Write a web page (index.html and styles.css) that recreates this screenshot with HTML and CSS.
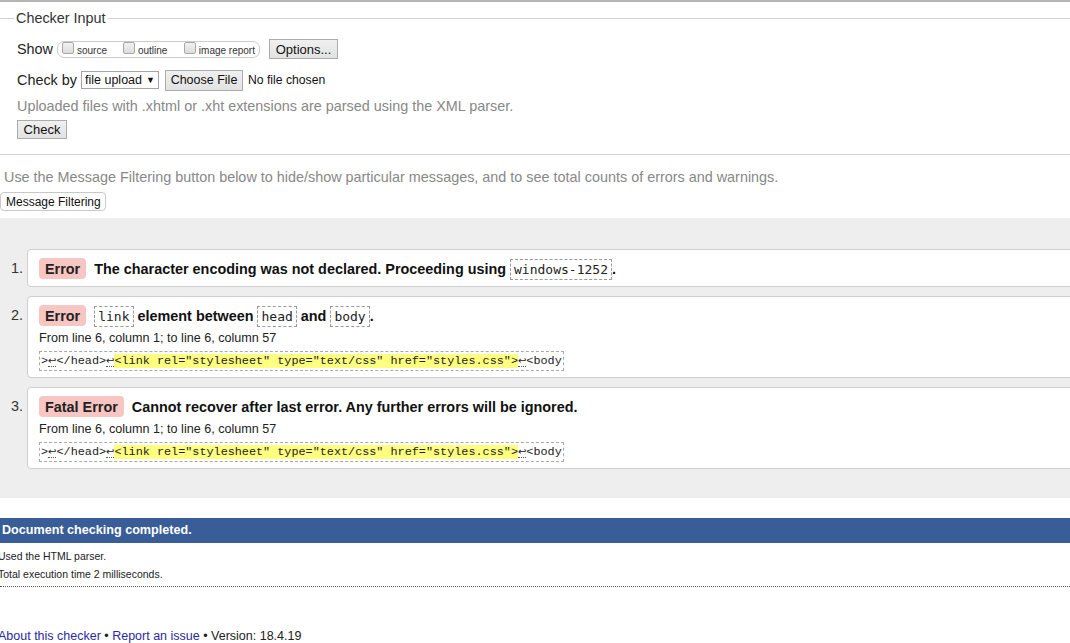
FILE: index.html
```html
<!DOCTYPE html>
<html>
<head>
<meta charset="utf-8">
<title>Checker</title>
<link rel="stylesheet" href="styles.css">
</head>
<body>
<div class="topline"></div>
<section class="checker">
  <div class="legend"><span>Checker Input</span></div>
  <div class="row show-row">
    <span class="label">Show</span>
    <span class="group">
      <span class="opt"><span class="cb"></span>source</span>
      <span class="opt"><span class="cb"></span>outline</span>
      <span class="opt"><span class="cb"></span>image report</span>
    </span>
    <span class="btn btn-options">Options...</span>
  </div>
  <div class="row by-row">
    <span class="label">Check by</span>
    <span class="select">file upload <span class="arrow">▼</span></span>
    <span class="btn btn-file">Choose File</span>
    <span class="nofile">No file chosen</span>
  </div>
  <div class="row note">Uploaded files with .xhtml or .xht extensions are parsed using the XML parser.</div>
  <div class="row check-row"><span class="btn btn-check">Check</span></div>
</section>
<div class="filter-text">Use the Message Filtering button below to hide/show particular messages, and to see total counts of errors and warnings.</div>
<div class="filter-row"><span class="btn-filter">Message Filtering</span></div>
<div class="results">
  <ol class="msgs">
    <li class="item">
      <span class="num">1.</span>
      <div class="box">
        <div class="msg"><span class="badge">Error</span><span class="text">The character encoding was not declared. Proceeding using <code>windows-1252</code>.</span></div>
      </div>
    </li>
    <li class="item">
      <span class="num">2.</span>
      <div class="box">
        <div class="msg"><span class="badge">Error</span><span class="text"><code>link</code> element between <code>head</code> and <code>body</code>.</span></div>
        <div class="loc">From line 6, column 1; to line 6, column 57</div>
        <div class="extract"><code class="ex">&gt;<span class="lf">↩</span>&lt;/head&gt;<span class="lf">↩</span><b>&lt;link rel="stylesheet" type="text/css" href="styles.css"&gt;</b><span class="lf">↩</span>&lt;body</code></div>
      </div>
    </li>
    <li class="item">
      <span class="num">3.</span>
      <div class="box">
        <div class="msg"><span class="badge">Fatal Error</span><span class="text">Cannot recover after last error. Any further errors will be ignored.</span></div>
        <div class="loc">From line 6, column 1; to line 6, column 57</div>
        <div class="extract"><code class="ex">&gt;<span class="lf">↩</span>&lt;/head&gt;<span class="lf">↩</span><b>&lt;link rel="stylesheet" type="text/css" href="styles.css"&gt;</b><span class="lf">↩</span>&lt;body</code></div>
      </div>
    </li>
  </ol>
</div>
<div class="done">Document checking completed.</div>
<div class="details">
  <p>Used the HTML parser.</p>
  <p>Total execution time 2 milliseconds.</p>
</div>
<div class="footer"><a href="#">About this checker</a> • <a href="#">Report an issue</a> • Version: 18.4.19</div>
</body>
</html>
```
FILE: styles.css
```css
html, body {
  margin: 0;
  padding: 0;
  background: #fff;
  overflow: hidden;
}
body {
  font-family: "Liberation Sans", Arial, sans-serif;
  font-size: 14.4px;
  color: #222;
  width: 1070px;
}
.topline {
  border-top: 2px solid #b4b4b4;
}
.checker {
  border-bottom: 1px solid #cfcfcf;
  padding-bottom: 15px;
}
.legend {
  display: flex;
  align-items: center;
  height: 20px;
  margin-top: 6px;
  color: #333;
}
.legend::before {
  content: "";
  width: 14px;
  border-top: 1px solid #cfcfcf;
}
.legend::after {
  content: "";
  flex: 1;
  border-top: 1px solid #cfcfcf;
}
.legend span {
  padding: 0 2px;
}
.row {
  display: flex;
  align-items: center;
  padding-left: 17px;
  height: 20px;
  white-space: nowrap;
}
.label {
  color: #222;
  margin-right: 4px;
}
.show-row {
  margin-top: 11px;
}
.group {
  display: flex;
  align-items: center;
  box-sizing: border-box;
  height: 17px;
  border: 1px solid #ccc;
  border-radius: 7px;
  padding: 0 4px;
  width: 203px;
  font-size: 10px;
  color: #333;
  white-space: nowrap;
}
.opt {
  display: flex;
  align-items: center;
  width: 62px;
  padding-top: 2px;
}
.opt:last-child {
  width: auto;
}
.cb {
  display: inline-block;
  width: 10px;
  height: 10px;
  border: 1px solid #a8a8a8;
  border-radius: 2px;
  background: linear-gradient(#f2f2f2, #dcdcdc);
  margin-right: 3px;
  margin-top: -5px;
}
.btn {
  display: inline-flex;
  align-items: center;
  justify-content: center;
  box-sizing: border-box;
  border: 1px solid #acacac;
  background: linear-gradient(#f0f0f0, #e2e2e2);
  font-size: 13px;
  color: #111;
}
.btn-options {
  margin-left: 9px;
  width: 69px;
  height: 20px;
}
.by-row {
  margin-top: 11px;
}
.select {
  display: inline-flex;
  align-items: center;
  box-sizing: border-box;
  height: 18px;
  width: 78px;
  border: 1px solid #a6a6a6;
  padding-left: 3px;
  font-size: 12.5px;
  color: #111;
}
.arrow {
  font-size: 9px;
  margin-left: 4px;
}
.btn-file {
  margin-left: 6px;
  width: 78px;
  height: 21px;
  font-size: 12.5px;
}
.nofile {
  margin-left: 5px;
  font-size: 12.2px;
  color: #111;
}
.note {
  margin-top: 6px;
  color: #888;
}
.check-row {
  margin-top: 4px;
  height: 19px;
}
.btn-check {
  width: 50px;
  height: 19px;
}
.filter-text {
  margin-top: 12px;
  height: 20px;
  line-height: 20px;
  padding-left: 4px;
  color: #888;
}
.filter-row {
  margin-top: 5px;
  height: 18px;
}
.btn-filter {
  display: inline-flex;
  align-items: center;
  box-sizing: border-box;
  height: 19px;
  width: 106px;
  padding-left: 5px;
  border: 1px solid #c8c8c8;
  border-radius: 4px;
  font-size: 12px;
  color: #111;
  background: #fff;
}
.results {
  margin-top: 8px;
  background: #eee;
  padding: 31px 0 29px 0;
  overflow: hidden;
}
.msgs {
  list-style: none;
  margin: 0;
  padding: 0;
  display: flex;
  flex-direction: column;
  gap: 9px;
}
.item {
  display: flex;
  align-items: flex-start;
}
.num {
  text-align: right;
  padding-right: 4px;
  box-sizing: border-box;
  width: 27px;
  padding-top: 9px;
  height: 30px;
  line-height: 21px;
  color: #333;
}
.box {
  flex: 1;
  margin-right: -4px;
  background: #fff;
  border: 1px solid #cfcfcf;
  border-radius: 4px;
  padding: 8px 0 7px 11px;
}
.msg {
  display: flex;
  align-items: center;
  height: 21px;
  white-space: nowrap;
}
.badge {
  display: inline-flex;
  align-items: center;
  height: 21px;
  padding: 0 6px;
  border-radius: 4px;
  background: #f7c6c2;
  font-weight: bold;
  color: #222;
  margin-right: 8px;
}
.text {
  font-weight: bold;
  color: #111;
}
code {
  font-family: "DejaVu Sans Mono", "Liberation Mono", monospace;
  font-weight: normal;
  font-size: 13px;
  border: 1px dashed #999;
  padding: 2px 3px;
  color: #222;
}
.loc {
  margin-top: 5px;
  height: 14px;
  line-height: 14px;
  font-size: 12.6px;
  color: #222;
}
.extract {
  margin-top: 6px;
  height: 19px;
}
code.ex {
  display: inline-block;
  font-family: "Liberation Mono", monospace;
  font-size: 11.8px;
  line-height: 17px;
  padding: 0 1px;
  border: 1px dashed #aaa;
  white-space: nowrap;
}
code.ex b {
  font-weight: normal;
  background: #ffff80;
}
.lf {
  border-bottom: 1px dotted #555;
  font-family: "DejaVu Sans", sans-serif;
  font-size: 10px;
}
.done {
  margin-top: 20px;
  height: 25px;
  line-height: 24px;
  background: #395d96;
  color: #fff;
  font-weight: bold;
  font-size: 12.6px;
  padding-left: 2px;
}
.details {
  margin-top: 4px;
  border-bottom: 1px dotted #555;
  padding-bottom: 3px;
}
.details p {
  margin: 0 0 0 -2px;
  font-size: 10.5px;
  height: 18px;
  line-height: 18px;
  color: #222;
}
.footer {
  margin-top: 40px;
  margin-left: -2px;
  height: 18px;
  line-height: 18px;
  font-size: 12.5px;
  color: #222;
}
.footer a {
  color: #2a2aa0;
  text-decoration: none;
}
```
